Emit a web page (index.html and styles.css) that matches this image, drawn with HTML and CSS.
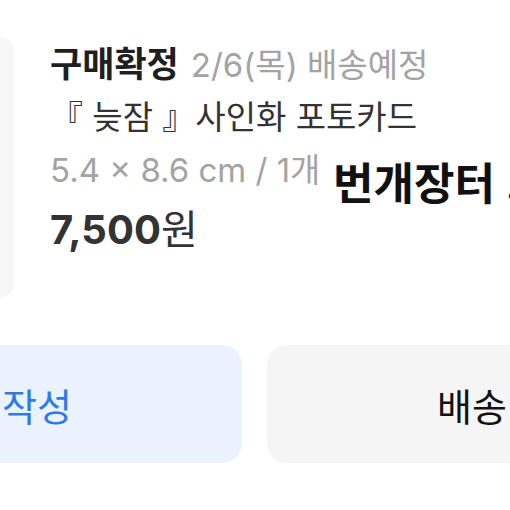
FILE: index.html
```html
<!DOCTYPE html>
<html lang="ko">
<head>
<meta charset="utf-8">
<link rel="stylesheet" href="styles.css">
</head>
<body>
<div class="page">
  <div class="top">
    <div class="thumb"></div>
    <div class="info">
      <div class="row1"><span class="status">구매확정</span><span class="date">2/6(목) 배송예정</span></div>
      <div class="name">『 늦잠 』사인화 포토카드</div>
      <div class="opt">5.4 × 8.6 cm / 1개</div>
      <div class="price">7,500<span class="won">원</span></div>
    </div>
  </div>
  <div class="brand">번개장터 .</div>
  <div class="buttons">
    <div class="btn btn-blue">작성</div>
    <div class="btn btn-gray">배송</div>
  </div>
</div>
</body>
</html>
```
FILE: styles.css
```css
html, body {
  margin: 0;
  padding: 0;
  background: #ffffff;
}
body {
  width: 510px;
  height: 510px;
  overflow: hidden;
  font-family: "Inter", "Noto Sans CJK KR", sans-serif;
}
.page {
  position: relative;
  width: 510px;
  height: 510px;
  overflow: hidden;
}
.top {
  display: flex;
  padding-top: 37px;
}
.thumb {
  width: 14px;
  height: 260px;
  background: #f6f6f6;
  border-radius: 0 18px 18px 0;
  flex: none;
}
.info {
  margin-left: 36px;
  padding-top: 4px;
  white-space: nowrap;
}
.row1 {
  display: flex;
  align-items: baseline;
  gap: 12px;
  height: 53px;
  line-height: 46px;
}
.status {
  font-size: 35px;
  font-weight: 700;
  color: #1f1f1f;
}
.date {
  font-size: 33px;
  color: #a3a3a3;
}
.name {
  font-size: 33px;
  color: #333333;
  height: 53px;
  line-height: 46px;
}
.opt {
  font-size: 33px;
  color: #a3a3a3;
  height: 60px;
  line-height: 46px;
}
.price {
  font-size: 40px;
  font-weight: 700;
  color: #333333;
  line-height: 46px;
}
.won {
  font-weight: 400;
}
.brand {
  position: absolute;
  left: 333px;
  top: 156px;
  font-size: 44px;
  font-weight: 700;
  color: #111111;
  white-space: nowrap;
  line-height: 56px;
}
.buttons {
  display: flex;
  gap: 25px;
  margin-top: 48px;
}
.btn {
  height: 118px;
  border-radius: 20px;
  display: flex;
  align-items: center;
  font-size: 38px;
  flex: none;
  box-sizing: border-box;
}
.btn-blue {
  width: 272px;
  margin-left: -30px;
  padding-left: 32px;
  background: #eaf2fd;
  color: #2f7be6;
}
.btn-gray {
  width: 280px;
  padding-left: 170px;
  background: #f5f5f5;
  color: #111111;
}
```
